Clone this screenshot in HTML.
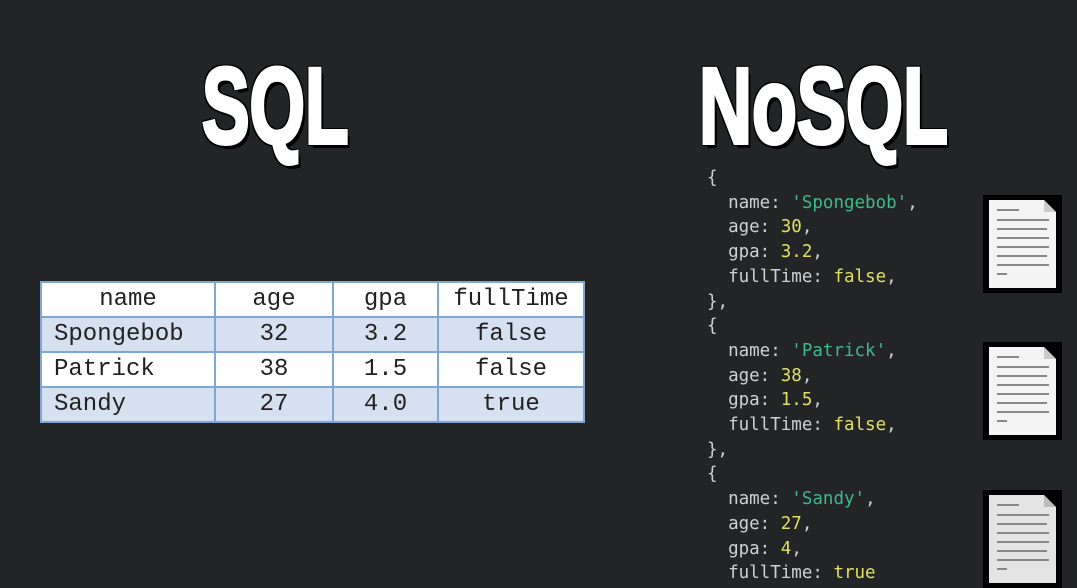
<!DOCTYPE html>
<html><head><meta charset="utf-8"><style>
body{margin:0;width:1077px;height:577px;background:#232426;overflow:hidden;position:relative;font-family:"Liberation Sans",sans-serif}
.t{position:absolute;top:52px;font-weight:bold;font-size:108px;color:#fff;-webkit-text-stroke:4px #fff;transform-origin:0 0;line-height:1;letter-spacing:0px;
text-shadow:3px 0 0 #000,-3px 0 0 #000,0 3px 0 #000,0 -3px 0 #000,3px 3px 0 #000,-3px -3px 0 #000,3px -3px 0 #000,-3px 3px 0 #000,5px 5px 0 #000}
table{position:absolute;left:40px;top:281px;border-collapse:collapse;font-family:"Liberation Mono",monospace;font-size:24px;color:#222}
td{border:2px solid #7fa6d4;height:33px;padding:0;text-align:center;background:#d5e1f0}
tr.h td{background:#fff;height:33px}
tr.w td{background:#fff}
td.n{text-align:left;padding-left:12px}
.code{position:absolute;left:707px;top:166px;font-family:"DejaVu Sans Mono",monospace;font-size:17.5px;line-height:24.7px;color:#d0d0d0;white-space:pre}
.s{color:#3fb98a}.y{color:#e0e060}
.doc{position:absolute;left:983px;width:79px;height:98px;background:#000}
.doc svg{position:absolute;left:6px;top:5px}
</style></head><body>
<div class="t" style="left:202px;transform:scaleX(0.66)">SQL</div>
<div class="t" style="left:699px;transform:scaleX(0.68)">NoSQL</div>
<table>
<col style="width:174px"><col style="width:118px"><col style="width:105px"><col style="width:146px">
<tr class="h"><td>name</td><td>age</td><td>gpa</td><td>fullTime</td></tr>
<tr><td class="n">Spongebob</td><td>32</td><td>3.2</td><td>false</td></tr>
<tr class="w"><td class="n">Patrick</td><td>38</td><td>1.5</td><td>false</td></tr>
<tr><td class="n">Sandy</td><td>27</td><td>4.0</td><td>true</td></tr>
</table>
<div class="code">{
  name: <span class="s">'Spongebob'</span>,
  age: <span class="y">30</span>,
  gpa: <span class="y">3.2</span>,
  fullTime: <span class="y">false</span>,
},
{
  name: <span class="s">'Patrick'</span>,
  age: <span class="y">38</span>,
  gpa: <span class="y">1.5</span>,
  fullTime: <span class="y">false</span>,
},
{
  name: <span class="s">'Sandy'</span>,
  age: <span class="y">27</span>,
  gpa: <span class="y">4</span>,
  fullTime: <span class="y">true</span></div>
<div class="doc" style="top:195px"><svg width="67" height="88"><path d="M0 0H55L67 12V88H0Z" fill="#f4f4f4"/><path d="M55 0V12H67" fill="#ccc"/><g stroke="#888" stroke-width="2"><line x1="8" y1="10" x2="30" y2="10"/><line x1="8" y1="20" x2="60" y2="20"/><line x1="8" y1="29" x2="58" y2="29"/><line x1="8" y1="38" x2="60" y2="38"/><line x1="8" y1="47" x2="60" y2="47"/><line x1="8" y1="56" x2="58" y2="56"/><line x1="8" y1="65" x2="60" y2="65"/><line x1="8" y1="74" x2="18" y2="74"/></g></svg></div>
<div class="doc" style="top:342px"><svg width="67" height="88"><path d="M0 0H55L67 12V88H0Z" fill="#f4f4f4"/><path d="M55 0V12H67" fill="#ccc"/><g stroke="#888" stroke-width="2"><line x1="8" y1="10" x2="30" y2="10"/><line x1="8" y1="20" x2="60" y2="20"/><line x1="8" y1="29" x2="58" y2="29"/><line x1="8" y1="38" x2="60" y2="38"/><line x1="8" y1="47" x2="60" y2="47"/><line x1="8" y1="56" x2="58" y2="56"/><line x1="8" y1="65" x2="60" y2="65"/><line x1="8" y1="74" x2="18" y2="74"/></g></svg></div>
<div class="doc" style="top:490px"><svg width="67" height="88"><path d="M0 0H55L67 12V88H0Z" fill="#e4e4e4"/><path d="M55 0V12H67" fill="#bbb"/><g stroke="#888" stroke-width="2"><line x1="8" y1="10" x2="30" y2="10"/><line x1="8" y1="20" x2="60" y2="20"/><line x1="8" y1="29" x2="58" y2="29"/><line x1="8" y1="38" x2="60" y2="38"/><line x1="8" y1="47" x2="60" y2="47"/><line x1="8" y1="56" x2="58" y2="56"/><line x1="8" y1="65" x2="60" y2="65"/><line x1="8" y1="74" x2="18" y2="74"/></g></svg></div>
</body></html>
